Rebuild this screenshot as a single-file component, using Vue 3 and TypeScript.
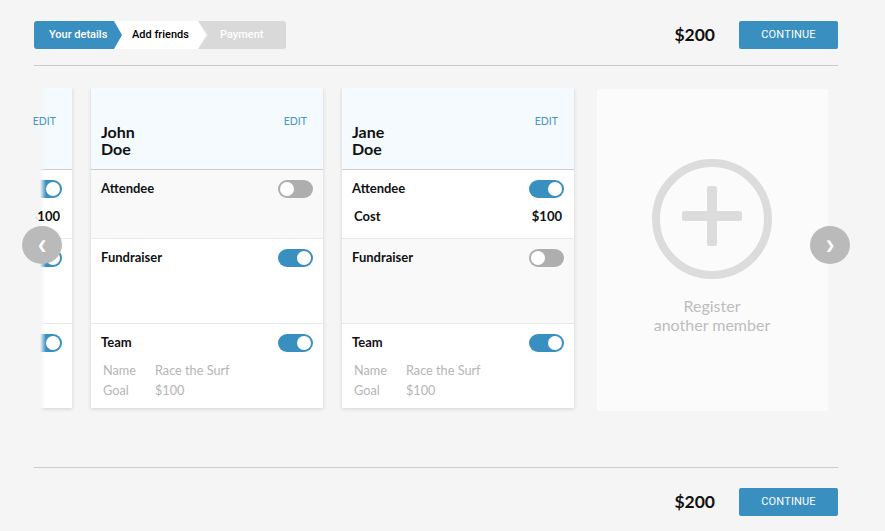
<script setup lang="ts">
interface Person { first: string; last: string; cost: boolean; attendeeOn: boolean; fundOn: boolean; peek: boolean }
const people: Person[] = [
  { first: 'Sam', last: 'Doe', cost: true, attendeeOn: true, fundOn: true, peek: true },
  { first: 'John', last: 'Doe', cost: false, attendeeOn: false, fundOn: true, peek: false },
  { first: 'Jane', last: 'Doe', cost: true, attendeeOn: true, fundOn: false, peek: false },
]
</script>

<template>
  <div class="page">
    <header class="bar top">
      <div class="steps">
        <div class="step done">Your details</div>
        <div class="step current">Add friends</div>
        <div class="step todo">Payment</div>
      </div>
      <div class="total">$200</div>
      <button class="continue">CONTINUE</button>
    </header>

    <main class="stage">
      <div class="viewport">
        <div class="track">
          <article v-for="p in people" :key="p.first" class="card">
            <div class="head">
              <a class="edit">EDIT</a>
              <div class="name">{{ p.first }}<br />{{ p.last }}</div>
            </div>
            <section class="sec s1" :class="{ off: !p.attendeeOn }">
              <div class="row">
                <span class="label">Attendee</span>
                <span class="toggle" :class="{ on: p.attendeeOn }"><i></i></span>
              </div>
              <div v-if="p.cost" class="cost">
                <span>Cost</span>
                <span class="amount" :class="{ peek: p.peek }">$100</span>
              </div>
            </section>
            <section class="sec s2" :class="{ off: !p.fundOn }">
              <div class="row">
                <span class="label">Fundraiser</span>
                <span class="toggle" :class="{ on: p.fundOn }"><i></i></span>
              </div>
            </section>
            <section class="sec s3">
              <div class="row">
                <span class="label">Team</span>
                <span class="toggle on"><i></i></span>
              </div>
              <dl class="team">
                <dt>Name</dt><dd>Race the Surf</dd>
                <dt>Goal</dt><dd>$100</dd>
              </dl>
            </section>
          </article>
          <article class="add">
            <svg class="plus" width="120" height="120" viewBox="0 0 120 120">
              <circle cx="60" cy="60" r="56" fill="none" stroke="#dcdcdc" stroke-width="8" />
              <rect x="30" y="52" width="60" height="10" rx="2.5" fill="#dcdcdc" />
              <rect x="55" y="27" width="10" height="60" rx="2.5" fill="#dcdcdc" />
            </svg>
            <div class="add-text">Register<br />another member</div>
          </article>
        </div>
        <div class="fade"></div>
      </div>
      <button class="nav prev">❮</button>
      <button class="nav next">❯</button>
    </main>

    <footer class="bar bottom">
      <div class="total">$200</div>
      <button class="continue">CONTINUE</button>
    </footer>
  </div>
</template>

<style>
html, body { margin: 0; background: #f5f5f5; }
</style>

<style scoped>
.page {
  width: 885px;
  height: 531px;
  overflow: hidden;
  box-sizing: border-box;
  padding: 21px 47px 0 34px;
  background: #f5f5f5;
  font-family: Lato, sans-serif;
  color: #111;
}
.bar { display: flex; align-items: center; height: 28px; }
.top { box-sizing: content-box; padding-bottom: 16px; border-bottom: 1px solid #ccc; }
.bottom { box-sizing: content-box; padding-top: 20px; border-top: 1px solid #ccc; justify-content: flex-end; }
.steps { display: flex; margin-right: auto; height: 28px; font: 500 11px/27px Roboto, sans-serif; }
.step { position: relative; box-sizing: border-box; height: 28px; }
.step::after {
  content: '';
  position: absolute;
  top: 0;
  left: 100%;
  width: 8px;
  height: 28px;
  clip-path: polygon(0 0, 100% 50%, 0 100%);
  z-index: 2;
}
.done { width: 80px; padding-left: 15px; background: #3a8fc1; color: #fff; border-radius: 3px 0 0 3px; }
.done::after { background: #3a8fc1; }
.current { width: 84px; padding-left: 18px; background: #fff; color: #000; }
.current::after { background: #fff; }
.todo { width: 88px; padding-left: 22px; background: #d9d9d9; color: #fff; border-radius: 0 3px 3px 0; }
.todo::after { display: none; }
.todo::before {
  content: '';
  position: absolute;
  top: 0;
  left: 0;
  width: 10px;
  height: 28px;
  background: #ececec;
  clip-path: polygon(0 0, 100% 50%, 0 100%);
}
.total { font-size: 17.5px; font-weight: 700; margin: 0 24px 2px 0; color: #111; }
.continue {
  width: 99px;
  height: 28px;
  padding: 0 0 1px;
  border: 0;
  border-radius: 2px;
  background: #3a8fc1;
  color: #fff;
  font: 400 11px Roboto, sans-serif;
  letter-spacing: 0.15px;
}
.stage { position: relative; height: 401px; }
.viewport { position: absolute; left: -1px; top: 22px; width: 795px; height: 330px; overflow: hidden; }
.track { display: flex; align-items: flex-start; gap: 19px; margin-left: -193px; padding-bottom: 8px; }
.card {
  flex: none;
  width: 232px;
  height: 320px;
  background: #fff;
  box-shadow: 0 1px 4px rgba(0, 0, 0, 0.14);
}
.head {
  position: relative;
  box-sizing: border-box;
  height: 82px;
  padding: 35px 10px 0;
  background: #f4fafd;
  border-bottom: 1px solid #ccc;
}
.edit { position: absolute; z-index: 2; top: 27px; right: 16px; font-size: 10.5px; color: #4596c4; }
.name { font-size: 16px; line-height: 17px; font-weight: 700; color: #111; }
.sec { box-sizing: border-box; padding: 9px 10px 0; border-bottom: 1px solid #e9e9e9; }
.sec.off { background: #f9f9f9; }
.s1 { height: 69px; }
.s2 { height: 85px; }
.s3 { height: 84px; border-bottom: 0; }
.row { display: flex; justify-content: space-between; align-items: flex-start; height: 18px; }
.label { font-size: 13px; font-weight: 700; line-height: 18px; color: #111; }
.toggle {
  position: relative;
  box-sizing: border-box;
  width: 35px;
  height: 18px;
  margin-top: 1px;
  border-radius: 9px;
  background: #aeaeae;
  display: flex;
  align-items: center;
  padding: 0 2px;
}
.toggle i { width: 14px; height: 14px; border-radius: 50%; background: #fff; }
.toggle.on { background: #3a8fc1; justify-content: flex-end; }
.cost {
  display: flex;
  justify-content: space-between;
  margin: 10px 2px 0;
  font-size: 13px;
  font-weight: 700;
  line-height: 18px;
}
.amount { position: relative; z-index: 2; }
.amount.peek { clip-path: inset(0 0 0 7px); }
.team {
  display: grid;
  grid-template-columns: 52px 1fr;
  margin: 9px 2px 0;
  font-size: 12.7px;
  line-height: 20px;
  color: #b5b5b5;
}
.team dt, .team dd { margin: 0; }
.add {
  flex: none;
  box-sizing: border-box;
  width: 233px;
  height: 322px;
  margin: 1px 0 0 4px;
  padding-top: 70px;
  background: #fbfbfb;
  text-align: center;
}
.plus { display: block; margin: 0 auto 17px 55px; }
.add-text { font-size: 16px; line-height: 19px; color: #bdbdbd; margin-left: -3px; }
.fade {
  position: absolute;
  z-index: 1;
  left: 0;
  top: 0;
  width: 13px;
  height: 100%;
  background: linear-gradient(to right, #f5f5f5 0, #f5f5f5 7px, rgba(245, 245, 245, 0) 100%);
}
.nav {
  position: absolute;
  z-index: 3;
  top: 160px;
  width: 40px;
  height: 38px;
  padding: 0;
  border: 0;
  border-radius: 50%;
  background: #bababa;
  color: #fff;
  font: 700 11px "DejaVu Sans", sans-serif;
  -webkit-text-stroke: 0.5px #fff;
}
.prev { left: -12px; }
.next { right: -12px; }
</style>
